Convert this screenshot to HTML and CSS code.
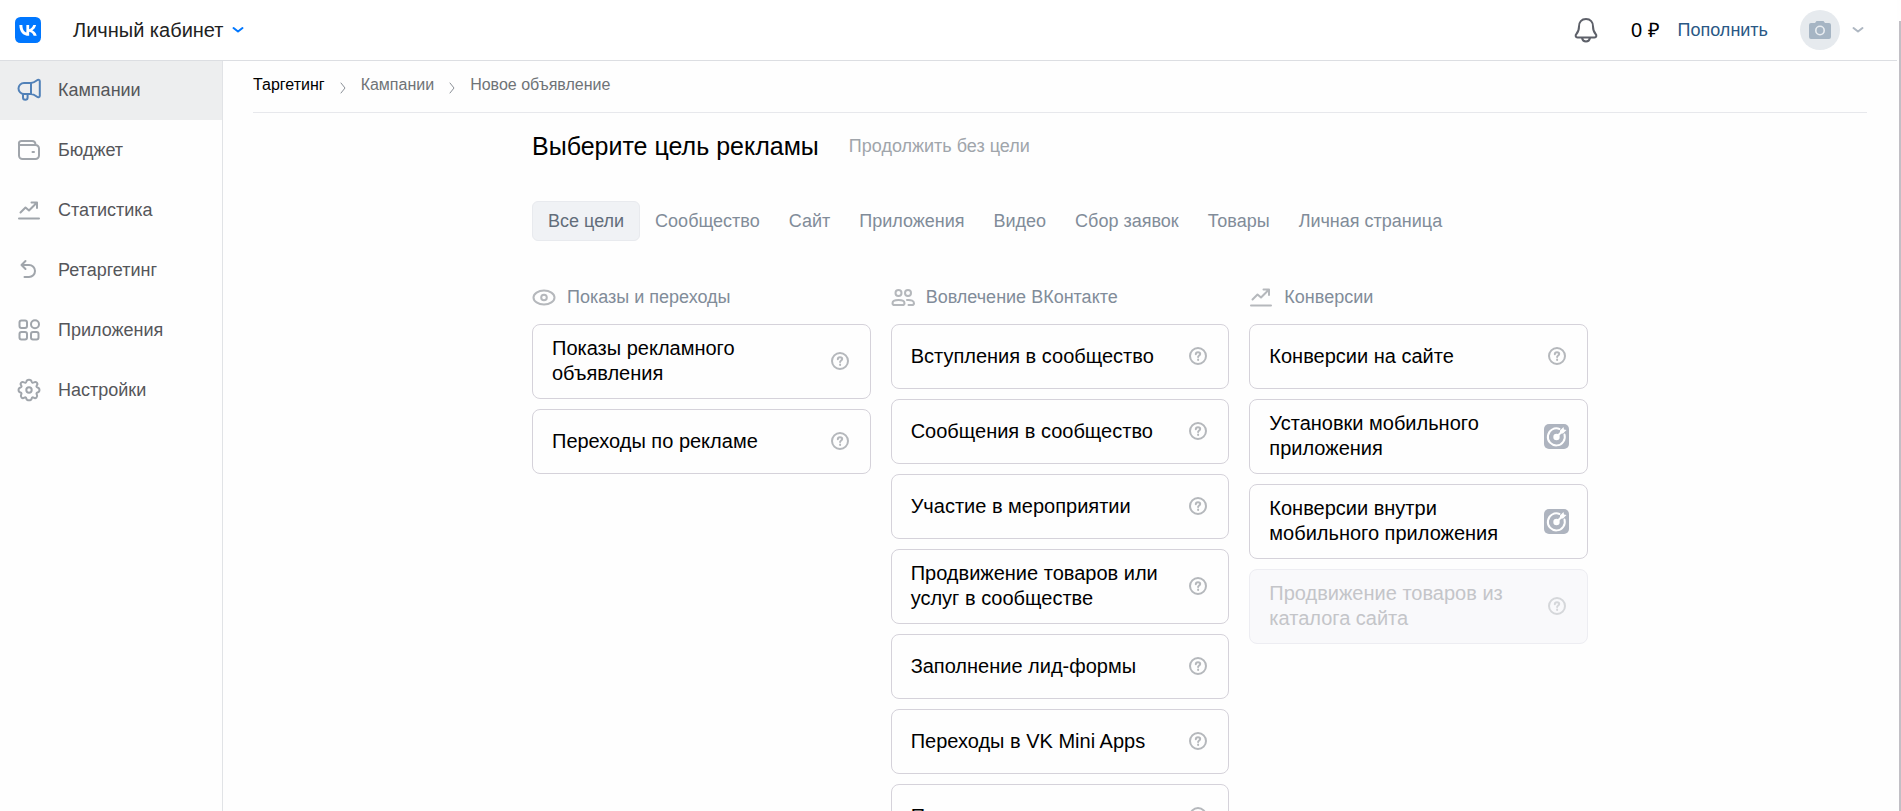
FILE: index.html
```html
<!DOCTYPE html>
<html lang="ru">
<head>
  <meta charset="utf-8">
  <title>Новое объявление</title>
  <link rel="stylesheet" href="styles.css">
</head>
<body>
  <!-- shared icons -->
  <svg class="sprite" width="0" height="0">
    <symbol id="help" viewBox="0 0 20 20">
      <circle cx="10" cy="10" r="8"/>
      <path d="M7.800 8.200c0-1.300.9-2 2.200-2s2.200.7 2.200 1.800c0 1.500-2.100 1.600-2.100 3.100"/>
      <path d="M10.100 13.600v.3"/>
    </symbol>
    <symbol id="stats" viewBox="0 0 24 24">
      <path d="M3.500 14.500l5-5 3.500 3L19.500 5M14.500 4.500H20V10M2 20.500h20"/>
    </symbol>
    <symbol id="target" viewBox="0 0 25 25">
      <rect class="target-bg" width="25" height="25" rx="5"/>
      <path class="target-ring" d="M15.500 5A8.500 8.500 0 1 0 20.500 10.500"/>
      <circle class="target-dot" cx="12.500" cy="13" r="3.200"/>
      <path class="target-line" d="M12.500 13l5-5"/>
      <path class="target-dot" d="M16 6.500L19.500 3l.5 2.500 2.500.5L19 9.500h-3z"/>
    </symbol>
    <symbol id="chevron" viewBox="0 0 12 8">
      <path d="M1.500 2L6 5.500 10.500 2"/>
    </symbol>
    <symbol id="crumb" viewBox="0 0 8 12">
      <path d="M2 1l4 5-4 5"/>
    </symbol>
  </svg>

  <header class="header">
    <a class="logo" href="#" aria-label="ВКонтакте">
      <svg width="26" height="26" viewBox="0 0 24 24">
        <rect width="24" height="24" rx="5" fill="#0077ff"/>
        <path fill="#fff" d="M12.770 17.290c-5.470 0-8.590-3.750-8.720-9.990h2.740c.09 4.580 2.110 6.520 3.710 6.920V7.300h2.580v3.950c1.580-.17 3.240-1.970 3.800-3.950h2.580c-.43 2.440-2.230 4.240-3.510 4.980 1.280.6 3.330 2.170 4.110 5.010h-2.840c-.61-1.900-2.130-3.370-4.140-3.570v3.570z"/>
      </svg>
    </a>
    <button class="cabinet">Личный кабинет
      <svg class="chevron blue" width="12" height="8"><use href="#chevron"/></svg>
    </button>
    <div class="header-right">
      <button class="bell" aria-label="Уведомления">
        <svg width="26" height="26" viewBox="0 0 26 26">
          <path d="M13 2c-4.500 0-7 3.200-7 7.500 0 4-.8 5.500-2.600 7.500-1.300 1.500-.9 3.500 1.100 3.500h17c2 0 2.400-2 1.100-3.500-1.800-2-2.600-3.500-2.600-7.500C20 5.200 17.500 2 13 2zM9 21c.4 2 2 3.400 4 3.400s3.600-1.400 4-3.400"/>
        </svg>
      </button>
      <span class="balance">0 ₽</span>
      <a class="refill" href="#">Пополнить</a>
      <button class="profile" aria-label="Профиль">
        <span class="avatar">
          <svg width="24" height="20" viewBox="0 0 24 20">
            <path fill="#a6b5c4" d="M3 3h4l1.500-2h7L17 3h4a2 2 0 0 1 2 2v12a2 2 0 0 1-2 2H3a2 2 0 0 1-2-2V5a2 2 0 0 1 2-2z"/>
            <circle cx="12" cy="10.500" r="4.200" fill="none" stroke="#e9edf1" stroke-width="1.600"/>
          </svg>
        </span>
        <svg class="chevron" width="12" height="8"><use href="#chevron"/></svg>
      </button>
    </div>
  </header>

  <div class="page">
    <nav class="sidebar">
      <a class="active" href="#">
        <svg viewBox="0 0 24 24"><path d="M14 5H7a4.500 4.500 0 0 0 0 11h7M14 5v11M14 5c2.500 0 4.500-1.600 6-2.700 1.400-1 2.800-.4 2.800 1v14.400c0 1.400-1.400 2-2.800 1-1.500-1.100-3.500-2.700-6-2.700M6 16v3.500a2.300 2.300 0 0 0 4.600 0V16"/></svg>
        Кампании
      </a>
      <a href="#">
        <svg viewBox="0 0 24 24"><path d="M2 6v11.500A3.500 3.500 0 0 0 5.500 21h13a3.500 3.500 0 0 0 3.500-3.500v-7A3.500 3.500 0 0 0 18.500 7H3.500C1 7 1.500 3 4.500 3H15c2.500 0 3.500 1.500 3.500 4M15.500 14H17"/></svg>
        Бюджет
      </a>
      <a href="#">
        <svg viewBox="0 0 24 24"><use href="#stats"/></svg>
        Статистика
      </a>
      <a href="#">
        <svg viewBox="0 0 24 24"><path d="M8.500 3L4.500 7l4 4M4.500 7h7.500a6 6 0 0 1 0 12H7.500"/></svg>
        Ретаргетинг
      </a>
      <a href="#">
        <svg viewBox="0 0 24 24"><rect x="2.500" y="2.500" width="7.500" height="7.500" rx="2"/><circle cx="18" cy="6.300" r="4"/><rect x="2.500" y="14" width="7.500" height="7.500" rx="2"/><rect x="14" y="14" width="7.500" height="7.500" rx="2"/></svg>
        Приложения
      </a>
      <a href="#">
        <svg viewBox="0 0 24 24"><path d="M9.300 3.800C9.800 1 14.200 1 14.700 3.800c.3 1 1 1.300 2 .7 2.600-1.500 4.700.9 3.100 3-.6 1-.4 1.700.7 2 2.600.6 2.600 4.400 0 5-1 .3-1.300 1-.7 2 1.300 2.500-1 4.600-3.200 3.200-1-.6-1.600-.4-1.900.7-.7 2.600-4.700 2.600-5.400 0-.3-1.100-.9-1.300-1.900-.7-2.200 1.400-4.500-.7-3.200-3.200.6-1 .3-1.700-.7-2-2.600-.6-2.600-4.400 0-5 1.100-.3 1.300-1 .7-2-1.600-2.100.5-4.500 3.100-3 1 .6 1.700.3 2-.7z"/><circle cx="12" cy="12" r="2.700"/></svg>
        Настройки
      </a>
    </nav>

    <main class="main">
      <div class="breadcrumbs">
        <a class="first" href="#">Таргетинг</a>
        <svg width="8" height="12"><use href="#crumb"/></svg>
        <a href="#">Кампании</a>
        <svg width="8" height="12"><use href="#crumb"/></svg>
        <span>Новое объявление</span>
      </div>

      <div class="content">
        <div class="title">
          <h1>Выберите цель рекламы</h1>
          <a href="#">Продолжить без цели</a>
        </div>

        <div class="tabs">
          <button class="selected">Все цели</button>
          <button>Сообщество</button>
          <button>Сайт</button>
          <button>Приложения</button>
          <button>Видео</button>
          <button>Сбор заявок</button>
          <button>Товары</button>
          <button>Личная страница</button>
        </div>

        <div class="columns">
          <section class="column">
            <h2>
              <svg viewBox="0 0 24 24"><ellipse cx="12" cy="12.500" rx="10.500" ry="7"/><circle cx="12" cy="12.500" r="2.800"/></svg>
              Показы и переходы
            </h2>
            <button class="card"><span>Показы рекламного объявления</span><svg class="help"><use href="#help"/></svg></button>
            <button class="card"><span>Переходы по рекламе</span><svg class="help"><use href="#help"/></svg></button>
          </section>

          <section class="column">
            <h2>
              <svg viewBox="0 0 24 24"><circle cx="7.500" cy="8" r="3"/><circle cx="17" cy="8" r="3"/><path d="M7.500 15c3.800 0 6 1.200 6 3.200 0 1.200-.8 1.800-2 1.800h-8c-1.200 0-2-.6-2-1.800 0-2 2.200-3.200 6-3.200zM16 15c4.500-.3 7 .9 7 3.200 0 1.200-.8 1.800-2 1.800h-3.500"/></svg>
              Вовлечение ВКонтакте
            </h2>
            <button class="card"><span>Вступления в сообщество</span><svg class="help"><use href="#help"/></svg></button>
            <button class="card"><span>Сообщения в сообщество</span><svg class="help"><use href="#help"/></svg></button>
            <button class="card"><span>Участие в мероприятии</span><svg class="help"><use href="#help"/></svg></button>
            <button class="card"><span>Продвижение товаров или услуг в сообществе</span><svg class="help"><use href="#help"/></svg></button>
            <button class="card"><span>Заполнение лид-формы</span><svg class="help"><use href="#help"/></svg></button>
            <button class="card"><span>Переходы в VK Mini Apps</span><svg class="help"><use href="#help"/></svg></button>
            <button class="card"><span>Просмотры видео</span><svg class="help"><use href="#help"/></svg></button>
          </section>

          <section class="column">
            <h2>
              <svg viewBox="0 0 24 24"><use href="#stats"/></svg>
              Конверсии
            </h2>
            <button class="card"><span>Конверсии на сайте</span><svg class="help"><use href="#help"/></svg></button>
            <button class="card"><span>Установки мобильного приложения</span><svg class="target"><use href="#target"/></svg></button>
            <button class="card"><span>Конверсии внутри мобильного приложения</span><svg class="target"><use href="#target"/></svg></button>
            <button class="card" disabled><span>Продвижение товаров из каталога сайта</span><svg class="help"><use href="#help"/></svg></button>
          </section>
        </div>
      </div>
    </main>
  </div>
  <div class="scrollbar"></div>
</body>
</html>
```
FILE: styles.css
```css
* {
  margin: 0;
  padding: 0;
  box-sizing: border-box;
}

body {
  height: 100vh;
  padding-right: 4px;
  overflow: hidden;
  display: flex;
  flex-direction: column;
  background: #fefefe;
  font-family: "Liberation Sans", Arial, sans-serif;
  font-size: 18px;
  line-height: 20px;
  color: #000;
}

a {
  color: inherit;
  text-decoration: none;
}

button {
  border: none;
  background: none;
  font: inherit;
  color: inherit;
  cursor: pointer;
}

svg {
  display: block;
  flex: none;
  fill: none;
  stroke: currentColor;
  stroke-width: 2;
  stroke-linecap: round;
  stroke-linejoin: round;
}

.sprite {
  position: absolute;
}

/* header */
.header {
  position: relative;
  flex: none;
  height: 60px;
  padding: 0 33px 0 15px;
  display: flex;
  align-items: center;
  background: #fff;
  box-shadow: 0 1px 0 #dcdee2;
}

.logo svg {
  stroke: none;
}

.cabinet {
  margin-left: 32px;
  display: flex;
  align-items: center;
  gap: 9px;
  font-size: 20px;
  line-height: 24px;
  color: #222;
}

.chevron {
  color: #aeb7c2;
}

.chevron.blue {
  color: #0077ff;
}

.header-right {
  margin-left: auto;
  display: flex;
  align-items: center;
}

.bell {
  margin-right: 32px;
  color: #5d6069;
}

.balance {
  font-size: 20px;
}

.refill {
  margin-left: 18px;
  margin-right: 32px;
  color: #2a5885;
}

.profile {
  display: flex;
  align-items: center;
  gap: 12px;
}

.avatar {
  width: 40px;
  height: 40px;
  border-radius: 50%;
  display: flex;
  align-items: center;
  justify-content: center;
  background: #e6eaee;
}

.avatar svg {
  stroke: none;
}

.page {
  flex: 1;
  min-height: 0;
  display: flex;
}

/* sidebar */
.sidebar {
  flex: none;
  width: 223px;
  border-right: 1px solid #e1e3e6;
}

.sidebar a {
  height: 60px;
  padding-left: 17px;
  display: flex;
  align-items: center;
  gap: 17px;
  color: #55565a;
}

.sidebar a.active {
  background: #edeeef;
}

.sidebar svg {
  width: 24px;
  height: 24px;
  color: #a0a5ab;
}

.sidebar .active svg {
  color: #5181b8;
}

/* main */
.main {
  flex: 1;
  min-width: 0;
  padding: 0 30px;
}

.breadcrumbs {
  height: 53px;
  padding-bottom: 2px;
  display: flex;
  align-items: center;
  gap: 14px;
  border-bottom: 1px solid #e7e8ec;
  font-size: 16px;
  color: #6f7377;
}

.breadcrumbs svg {
  margin-top: 6px;
  stroke-width: 1;
  color: #8a8f96;
}

.breadcrumbs .first {
  color: #000;
}

.content {
  max-width: 1056px;
  margin: 0 auto;
}

.title {
  padding-top: 18px;
  display: flex;
  align-items: center;
  gap: 30px;
}

.title h1 {
  font-size: 25px;
  line-height: 30px;
  font-weight: normal;
}

.title a {
  color: #a0a5ab;
}

.tabs {
  margin-top: 40px;
  display: flex;
  gap: 1px;
}

.tabs button {
  height: 40px;
  padding: 0 14px;
  border-radius: 6px;
  color: #818c99;
}

.tabs .selected {
  background: #f0f2f5;
  border: 1px solid #e8eaee;
  padding: 0 15px;
  color: #626d7a;
}

.columns {
  margin-top: 44px;
  display: grid;
  grid-template-columns: repeat(3, 1fr);
  gap: 20px;
}

.column {
  display: flex;
  flex-direction: column;
  gap: 10px;
}

.column h2 {
  height: 29px;
  padding-bottom: 5px;
  display: flex;
  align-items: center;
  gap: 11px;
  font-size: 18px;
  font-weight: normal;
  color: #818c99;
}

.column h2 svg {
  width: 24px;
  height: 24px;
  color: #b5b8bc;
}

.card {
  min-height: 65px;
  padding: 11px 18px 12px 19px;
  display: flex;
  align-items: center;
  justify-content: space-between;
  gap: 20px;
  border: 1px solid #d5d2da;
  border-radius: 8px;
  font-size: 20px;
  line-height: 25px;
  text-align: left;
}

.card svg {
  color: #b5b8bc;
}

.card .help {
  width: 20px;
  height: 20px;
  margin-right: 2px;
  stroke-width: 2;
}

.card .target {
  width: 25px;
  height: 25px;
}

.target-bg {
  fill: #aeb4bf;
  stroke: none;
}

.target-ring,
.target-line {
  stroke: #fff;
}

.target-dot {
  fill: #fff;
  stroke: none;
}

.card:disabled {
  background: #f9f9fb;
  border-color: #ededf2;
  color: #c4c5c9;
  cursor: default;
}

.card:disabled svg {
  color: #d5d7da;
}

/* thin scrollbar on the window edge */
.scrollbar {
  position: fixed;
  top: 21px;
  right: 0;
  bottom: 0;
  width: 2px;
  background: #c1bfc5;
}
```
